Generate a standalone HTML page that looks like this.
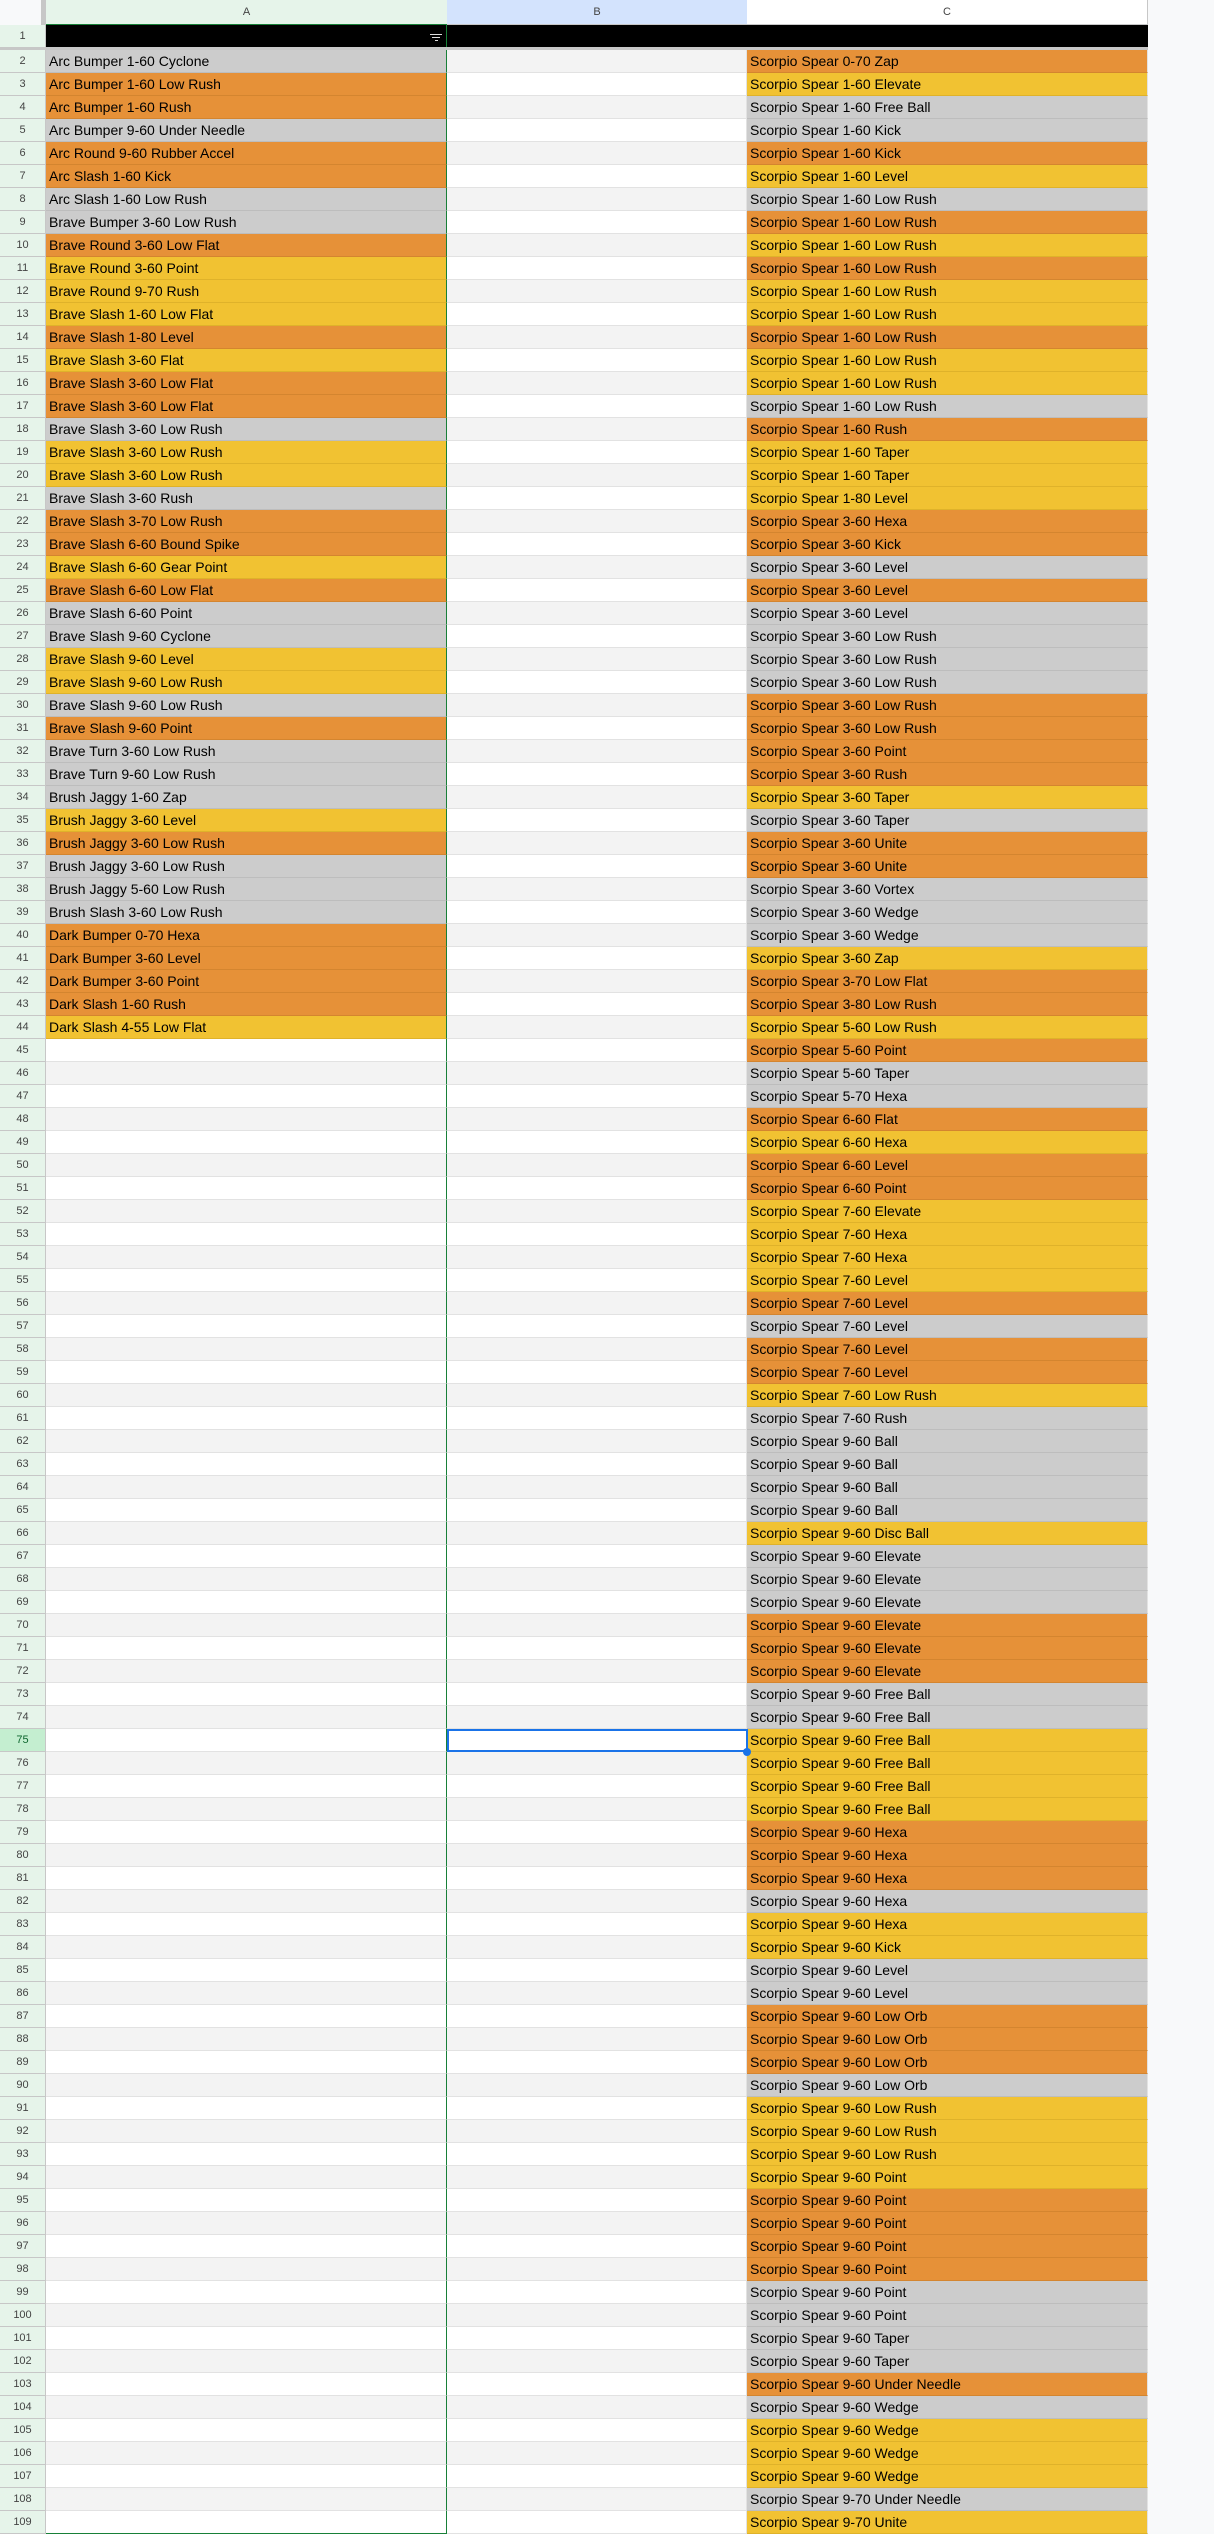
<!DOCTYPE html>
<html><head><meta charset="utf-8"><style>
*{margin:0;padding:0;box-sizing:border-box}
body{width:1214px;height:2534px;overflow:hidden;background:#f8f9fa;font-family:"Liberation Sans",Arial,sans-serif;position:relative}
.hd{position:absolute;top:0;left:0;height:25px;width:1214px;background:#f8f9fa}
.hd div{position:absolute;top:0;height:25px;font-size:11px;color:#444;text-align:center;line-height:25px}
.r1{position:absolute;top:25px;left:0;height:22px;width:1148px}
.fz{position:absolute;top:47px;left:0;height:3px;width:1148px;background:#c7c7c7}
#g{position:absolute;top:50px;left:0;width:1148px}
.r{display:flex;height:23px}
.r i{font-style:normal;width:46px;background:#e6f4ea;border-right:1px solid #c7c7c7;border-bottom:1px solid #c7c7c7;font-size:11px;color:#444;text-align:center;line-height:22px}
.r b,.r s,.r u{font-weight:normal;text-decoration:none;display:block;height:23px;border-bottom:1px solid #e2e2e2;font-size:14px;line-height:22px;padding-left:3px;white-space:nowrap;overflow:hidden;color:#000}
.r b{width:401px;border-right:1px solid #188038}
.r s{width:300px;border-right:1px solid #e2e2e2}
.r u{width:401px;border-right:1px solid #e2e2e2}
.r:nth-child(odd) b,.r:nth-child(odd) s{background:#f3f3f3}
.r:nth-child(even) b,.r:nth-child(even) s{background:#fff}
.r b.g,.r u.g{background:#cccccc!important;border-bottom-color:#bdbdbd}
.r b.o,.r u.o{background:#e69138!important;border-bottom-color:#d4852f}
.r b.y,.r u.y{background:#f1c232!important;border-bottom-color:#dfb22a}
.r u{background:#fff}
.sel{position:absolute;left:447px;top:1729px;width:301px;height:23px;border:2px solid #1a73e8}
.dot{position:absolute;left:743px;top:1748px;width:8px;height:8px;border-radius:50%;background:#1a73e8}
</style></head><body>
<div class="hd">
<div style="left:0;width:41px;background:#f8f9fa"></div>
<div style="left:41px;width:5px;background:#c7c7c7"></div>
<div style="left:46px;width:401px;background:#e6f4ea;border-bottom:1px solid #188038">A</div>
<div style="left:447px;width:300px;background:#d3e3fd;border-bottom:1px solid #c7c7c7">B</div>
<div style="left:747px;width:401px;background:#fff;border-bottom:1px solid #c7c7c7;border-right:1px solid #c7c7c7">C</div>
</div>
<div class="r1">
<div style="position:absolute;left:0;top:0;width:46px;height:22px;background:#e6f4ea;border-right:1px solid #c7c7c7;font-size:11px;color:#444;text-align:center;line-height:22px">1</div>
<div style="position:absolute;left:46px;top:0;width:1102px;height:22px;background:#000"></div>
<div style="position:absolute;left:446px;top:0;width:1px;height:22px;background:#188038"></div>
<div style="position:absolute;left:430px;top:9px;width:12px;height:1px;background:#ddd"></div>
<div style="position:absolute;left:432px;top:12px;width:8px;height:1px;background:#ddd"></div>
<div style="position:absolute;left:435px;top:15px;width:3px;height:1px;background:#ddd"></div>
</div>
<div class="fz"></div>
<div id="g">
<div class="r"><i>2</i><b class="g">Arc Bumper 1-60 Cyclone</b><s></s><u class="o">Scorpio Spear 0-70 Zap</u></div>
<div class="r"><i>3</i><b class="o">Arc Bumper 1-60 Low Rush</b><s></s><u class="y">Scorpio Spear 1-60 Elevate</u></div>
<div class="r"><i>4</i><b class="o">Arc Bumper 1-60 Rush</b><s></s><u class="g">Scorpio Spear 1-60 Free Ball</u></div>
<div class="r"><i>5</i><b class="g">Arc Bumper 9-60 Under Needle</b><s></s><u class="g">Scorpio Spear 1-60 Kick</u></div>
<div class="r"><i>6</i><b class="o">Arc Round 9-60 Rubber Accel</b><s></s><u class="o">Scorpio Spear 1-60 Kick</u></div>
<div class="r"><i>7</i><b class="o">Arc Slash 1-60 Kick</b><s></s><u class="y">Scorpio Spear 1-60 Level</u></div>
<div class="r"><i>8</i><b class="g">Arc Slash 1-60 Low Rush</b><s></s><u class="g">Scorpio Spear 1-60 Low Rush</u></div>
<div class="r"><i>9</i><b class="g">Brave Bumper 3-60 Low Rush</b><s></s><u class="o">Scorpio Spear 1-60 Low Rush</u></div>
<div class="r"><i>10</i><b class="o">Brave Round 3-60 Low Flat</b><s></s><u class="y">Scorpio Spear 1-60 Low Rush</u></div>
<div class="r"><i>11</i><b class="y">Brave Round 3-60 Point</b><s></s><u class="o">Scorpio Spear 1-60 Low Rush</u></div>
<div class="r"><i>12</i><b class="y">Brave Round 9-70 Rush</b><s></s><u class="y">Scorpio Spear 1-60 Low Rush</u></div>
<div class="r"><i>13</i><b class="y">Brave Slash 1-60 Low Flat</b><s></s><u class="y">Scorpio Spear 1-60 Low Rush</u></div>
<div class="r"><i>14</i><b class="o">Brave Slash 1-80 Level</b><s></s><u class="o">Scorpio Spear 1-60 Low Rush</u></div>
<div class="r"><i>15</i><b class="y">Brave Slash 3-60 Flat</b><s></s><u class="y">Scorpio Spear 1-60 Low Rush</u></div>
<div class="r"><i>16</i><b class="o">Brave Slash 3-60 Low Flat</b><s></s><u class="y">Scorpio Spear 1-60 Low Rush</u></div>
<div class="r"><i>17</i><b class="o">Brave Slash 3-60 Low Flat</b><s></s><u class="g">Scorpio Spear 1-60 Low Rush</u></div>
<div class="r"><i>18</i><b class="g">Brave Slash 3-60 Low Rush</b><s></s><u class="o">Scorpio Spear 1-60 Rush</u></div>
<div class="r"><i>19</i><b class="y">Brave Slash 3-60 Low Rush</b><s></s><u class="y">Scorpio Spear 1-60 Taper</u></div>
<div class="r"><i>20</i><b class="y">Brave Slash 3-60 Low Rush</b><s></s><u class="y">Scorpio Spear 1-60 Taper</u></div>
<div class="r"><i>21</i><b class="g">Brave Slash 3-60 Rush</b><s></s><u class="y">Scorpio Spear 1-80 Level</u></div>
<div class="r"><i>22</i><b class="o">Brave Slash 3-70 Low Rush</b><s></s><u class="o">Scorpio Spear 3-60 Hexa</u></div>
<div class="r"><i>23</i><b class="o">Brave Slash 6-60 Bound Spike</b><s></s><u class="o">Scorpio Spear 3-60 Kick</u></div>
<div class="r"><i>24</i><b class="y">Brave Slash 6-60 Gear Point</b><s></s><u class="g">Scorpio Spear 3-60 Level</u></div>
<div class="r"><i>25</i><b class="o">Brave Slash 6-60 Low Flat</b><s></s><u class="o">Scorpio Spear 3-60 Level</u></div>
<div class="r"><i>26</i><b class="g">Brave Slash 6-60 Point</b><s></s><u class="g">Scorpio Spear 3-60 Level</u></div>
<div class="r"><i>27</i><b class="g">Brave Slash 9-60 Cyclone</b><s></s><u class="g">Scorpio Spear 3-60 Low Rush</u></div>
<div class="r"><i>28</i><b class="y">Brave Slash 9-60 Level</b><s></s><u class="g">Scorpio Spear 3-60 Low Rush</u></div>
<div class="r"><i>29</i><b class="y">Brave Slash 9-60 Low Rush</b><s></s><u class="g">Scorpio Spear 3-60 Low Rush</u></div>
<div class="r"><i>30</i><b class="g">Brave Slash 9-60 Low Rush</b><s></s><u class="o">Scorpio Spear 3-60 Low Rush</u></div>
<div class="r"><i>31</i><b class="o">Brave Slash 9-60 Point</b><s></s><u class="o">Scorpio Spear 3-60 Low Rush</u></div>
<div class="r"><i>32</i><b class="g">Brave Turn 3-60 Low Rush</b><s></s><u class="o">Scorpio Spear 3-60 Point</u></div>
<div class="r"><i>33</i><b class="g">Brave Turn 9-60 Low Rush</b><s></s><u class="o">Scorpio Spear 3-60 Rush</u></div>
<div class="r"><i>34</i><b class="g">Brush Jaggy 1-60 Zap</b><s></s><u class="y">Scorpio Spear 3-60 Taper</u></div>
<div class="r"><i>35</i><b class="y">Brush Jaggy 3-60 Level</b><s></s><u class="g">Scorpio Spear 3-60 Taper</u></div>
<div class="r"><i>36</i><b class="o">Brush Jaggy 3-60 Low Rush</b><s></s><u class="o">Scorpio Spear 3-60 Unite</u></div>
<div class="r"><i>37</i><b class="g">Brush Jaggy 3-60 Low Rush</b><s></s><u class="o">Scorpio Spear 3-60 Unite</u></div>
<div class="r"><i>38</i><b class="g">Brush Jaggy 5-60 Low Rush</b><s></s><u class="g">Scorpio Spear 3-60 Vortex</u></div>
<div class="r"><i>39</i><b class="g">Brush Slash 3-60 Low Rush</b><s></s><u class="g">Scorpio Spear 3-60 Wedge</u></div>
<div class="r"><i>40</i><b class="o">Dark Bumper 0-70 Hexa</b><s></s><u class="g">Scorpio Spear 3-60 Wedge</u></div>
<div class="r"><i>41</i><b class="o">Dark Bumper 3-60 Level</b><s></s><u class="y">Scorpio Spear 3-60 Zap</u></div>
<div class="r"><i>42</i><b class="o">Dark Bumper 3-60 Point</b><s></s><u class="o">Scorpio Spear 3-70 Low Flat</u></div>
<div class="r"><i>43</i><b class="o">Dark Slash 1-60 Rush</b><s></s><u class="o">Scorpio Spear 3-80 Low Rush</u></div>
<div class="r"><i>44</i><b class="y">Dark Slash 4-55 Low Flat</b><s></s><u class="y">Scorpio Spear 5-60 Low Rush</u></div>
<div class="r"><i>45</i><b></b><s></s><u class="o">Scorpio Spear 5-60 Point</u></div>
<div class="r"><i>46</i><b></b><s></s><u class="g">Scorpio Spear 5-60 Taper</u></div>
<div class="r"><i>47</i><b></b><s></s><u class="g">Scorpio Spear 5-70 Hexa</u></div>
<div class="r"><i>48</i><b></b><s></s><u class="o">Scorpio Spear 6-60 Flat</u></div>
<div class="r"><i>49</i><b></b><s></s><u class="y">Scorpio Spear 6-60 Hexa</u></div>
<div class="r"><i>50</i><b></b><s></s><u class="o">Scorpio Spear 6-60 Level</u></div>
<div class="r"><i>51</i><b></b><s></s><u class="o">Scorpio Spear 6-60 Point</u></div>
<div class="r"><i>52</i><b></b><s></s><u class="y">Scorpio Spear 7-60 Elevate</u></div>
<div class="r"><i>53</i><b></b><s></s><u class="y">Scorpio Spear 7-60 Hexa</u></div>
<div class="r"><i>54</i><b></b><s></s><u class="y">Scorpio Spear 7-60 Hexa</u></div>
<div class="r"><i>55</i><b></b><s></s><u class="y">Scorpio Spear 7-60 Level</u></div>
<div class="r"><i>56</i><b></b><s></s><u class="o">Scorpio Spear 7-60 Level</u></div>
<div class="r"><i>57</i><b></b><s></s><u class="g">Scorpio Spear 7-60 Level</u></div>
<div class="r"><i>58</i><b></b><s></s><u class="o">Scorpio Spear 7-60 Level</u></div>
<div class="r"><i>59</i><b></b><s></s><u class="o">Scorpio Spear 7-60 Level</u></div>
<div class="r"><i>60</i><b></b><s></s><u class="y">Scorpio Spear 7-60 Low Rush</u></div>
<div class="r"><i>61</i><b></b><s></s><u class="g">Scorpio Spear 7-60 Rush</u></div>
<div class="r"><i>62</i><b></b><s></s><u class="g">Scorpio Spear 9-60 Ball</u></div>
<div class="r"><i>63</i><b></b><s></s><u class="g">Scorpio Spear 9-60 Ball</u></div>
<div class="r"><i>64</i><b></b><s></s><u class="g">Scorpio Spear 9-60 Ball</u></div>
<div class="r"><i>65</i><b></b><s></s><u class="g">Scorpio Spear 9-60 Ball</u></div>
<div class="r"><i>66</i><b></b><s></s><u class="y">Scorpio Spear 9-60 Disc Ball</u></div>
<div class="r"><i>67</i><b></b><s></s><u class="g">Scorpio Spear 9-60 Elevate</u></div>
<div class="r"><i>68</i><b></b><s></s><u class="g">Scorpio Spear 9-60 Elevate</u></div>
<div class="r"><i>69</i><b></b><s></s><u class="g">Scorpio Spear 9-60 Elevate</u></div>
<div class="r"><i>70</i><b></b><s></s><u class="o">Scorpio Spear 9-60 Elevate</u></div>
<div class="r"><i>71</i><b></b><s></s><u class="o">Scorpio Spear 9-60 Elevate</u></div>
<div class="r"><i>72</i><b></b><s></s><u class="o">Scorpio Spear 9-60 Elevate</u></div>
<div class="r"><i>73</i><b></b><s></s><u class="g">Scorpio Spear 9-60 Free Ball</u></div>
<div class="r"><i>74</i><b></b><s></s><u class="g">Scorpio Spear 9-60 Free Ball</u></div>
<div class="r"><i style="background:#c4eed0;color:#0d652d">75</i><b></b><s></s><u class="y">Scorpio Spear 9-60 Free Ball</u></div>
<div class="r"><i>76</i><b></b><s></s><u class="y">Scorpio Spear 9-60 Free Ball</u></div>
<div class="r"><i>77</i><b></b><s></s><u class="y">Scorpio Spear 9-60 Free Ball</u></div>
<div class="r"><i>78</i><b></b><s></s><u class="y">Scorpio Spear 9-60 Free Ball</u></div>
<div class="r"><i>79</i><b></b><s></s><u class="o">Scorpio Spear 9-60 Hexa</u></div>
<div class="r"><i>80</i><b></b><s></s><u class="o">Scorpio Spear 9-60 Hexa</u></div>
<div class="r"><i>81</i><b></b><s></s><u class="o">Scorpio Spear 9-60 Hexa</u></div>
<div class="r"><i>82</i><b></b><s></s><u class="g">Scorpio Spear 9-60 Hexa</u></div>
<div class="r"><i>83</i><b></b><s></s><u class="y">Scorpio Spear 9-60 Hexa</u></div>
<div class="r"><i>84</i><b></b><s></s><u class="y">Scorpio Spear 9-60 Kick</u></div>
<div class="r"><i>85</i><b></b><s></s><u class="g">Scorpio Spear 9-60 Level</u></div>
<div class="r"><i>86</i><b></b><s></s><u class="g">Scorpio Spear 9-60 Level</u></div>
<div class="r"><i>87</i><b></b><s></s><u class="o">Scorpio Spear 9-60 Low Orb</u></div>
<div class="r"><i>88</i><b></b><s></s><u class="o">Scorpio Spear 9-60 Low Orb</u></div>
<div class="r"><i>89</i><b></b><s></s><u class="o">Scorpio Spear 9-60 Low Orb</u></div>
<div class="r"><i>90</i><b></b><s></s><u class="g">Scorpio Spear 9-60 Low Orb</u></div>
<div class="r"><i>91</i><b></b><s></s><u class="y">Scorpio Spear 9-60 Low Rush</u></div>
<div class="r"><i>92</i><b></b><s></s><u class="y">Scorpio Spear 9-60 Low Rush</u></div>
<div class="r"><i>93</i><b></b><s></s><u class="y">Scorpio Spear 9-60 Low Rush</u></div>
<div class="r"><i>94</i><b></b><s></s><u class="y">Scorpio Spear 9-60 Point</u></div>
<div class="r"><i>95</i><b></b><s></s><u class="o">Scorpio Spear 9-60 Point</u></div>
<div class="r"><i>96</i><b></b><s></s><u class="o">Scorpio Spear 9-60 Point</u></div>
<div class="r"><i>97</i><b></b><s></s><u class="o">Scorpio Spear 9-60 Point</u></div>
<div class="r"><i>98</i><b></b><s></s><u class="o">Scorpio Spear 9-60 Point</u></div>
<div class="r"><i>99</i><b></b><s></s><u class="g">Scorpio Spear 9-60 Point</u></div>
<div class="r"><i>100</i><b></b><s></s><u class="g">Scorpio Spear 9-60 Point</u></div>
<div class="r"><i>101</i><b></b><s></s><u class="g">Scorpio Spear 9-60 Taper</u></div>
<div class="r"><i>102</i><b></b><s></s><u class="g">Scorpio Spear 9-60 Taper</u></div>
<div class="r"><i>103</i><b></b><s></s><u class="o">Scorpio Spear 9-60 Under Needle</u></div>
<div class="r"><i>104</i><b></b><s></s><u class="g">Scorpio Spear 9-60 Wedge</u></div>
<div class="r"><i>105</i><b></b><s></s><u class="y">Scorpio Spear 9-60 Wedge</u></div>
<div class="r"><i>106</i><b></b><s></s><u class="y">Scorpio Spear 9-60 Wedge</u></div>
<div class="r"><i>107</i><b></b><s></s><u class="y">Scorpio Spear 9-60 Wedge</u></div>
<div class="r"><i>108</i><b></b><s></s><u class="g">Scorpio Spear 9-70 Under Needle</u></div>
<div class="r"><i>109</i><b style="border-bottom:1px solid #188038"></b><s></s><u class="y">Scorpio Spear 9-70 Unite</u></div>
</div>
<div class="sel"></div><div class="dot"></div>
</body></html>
